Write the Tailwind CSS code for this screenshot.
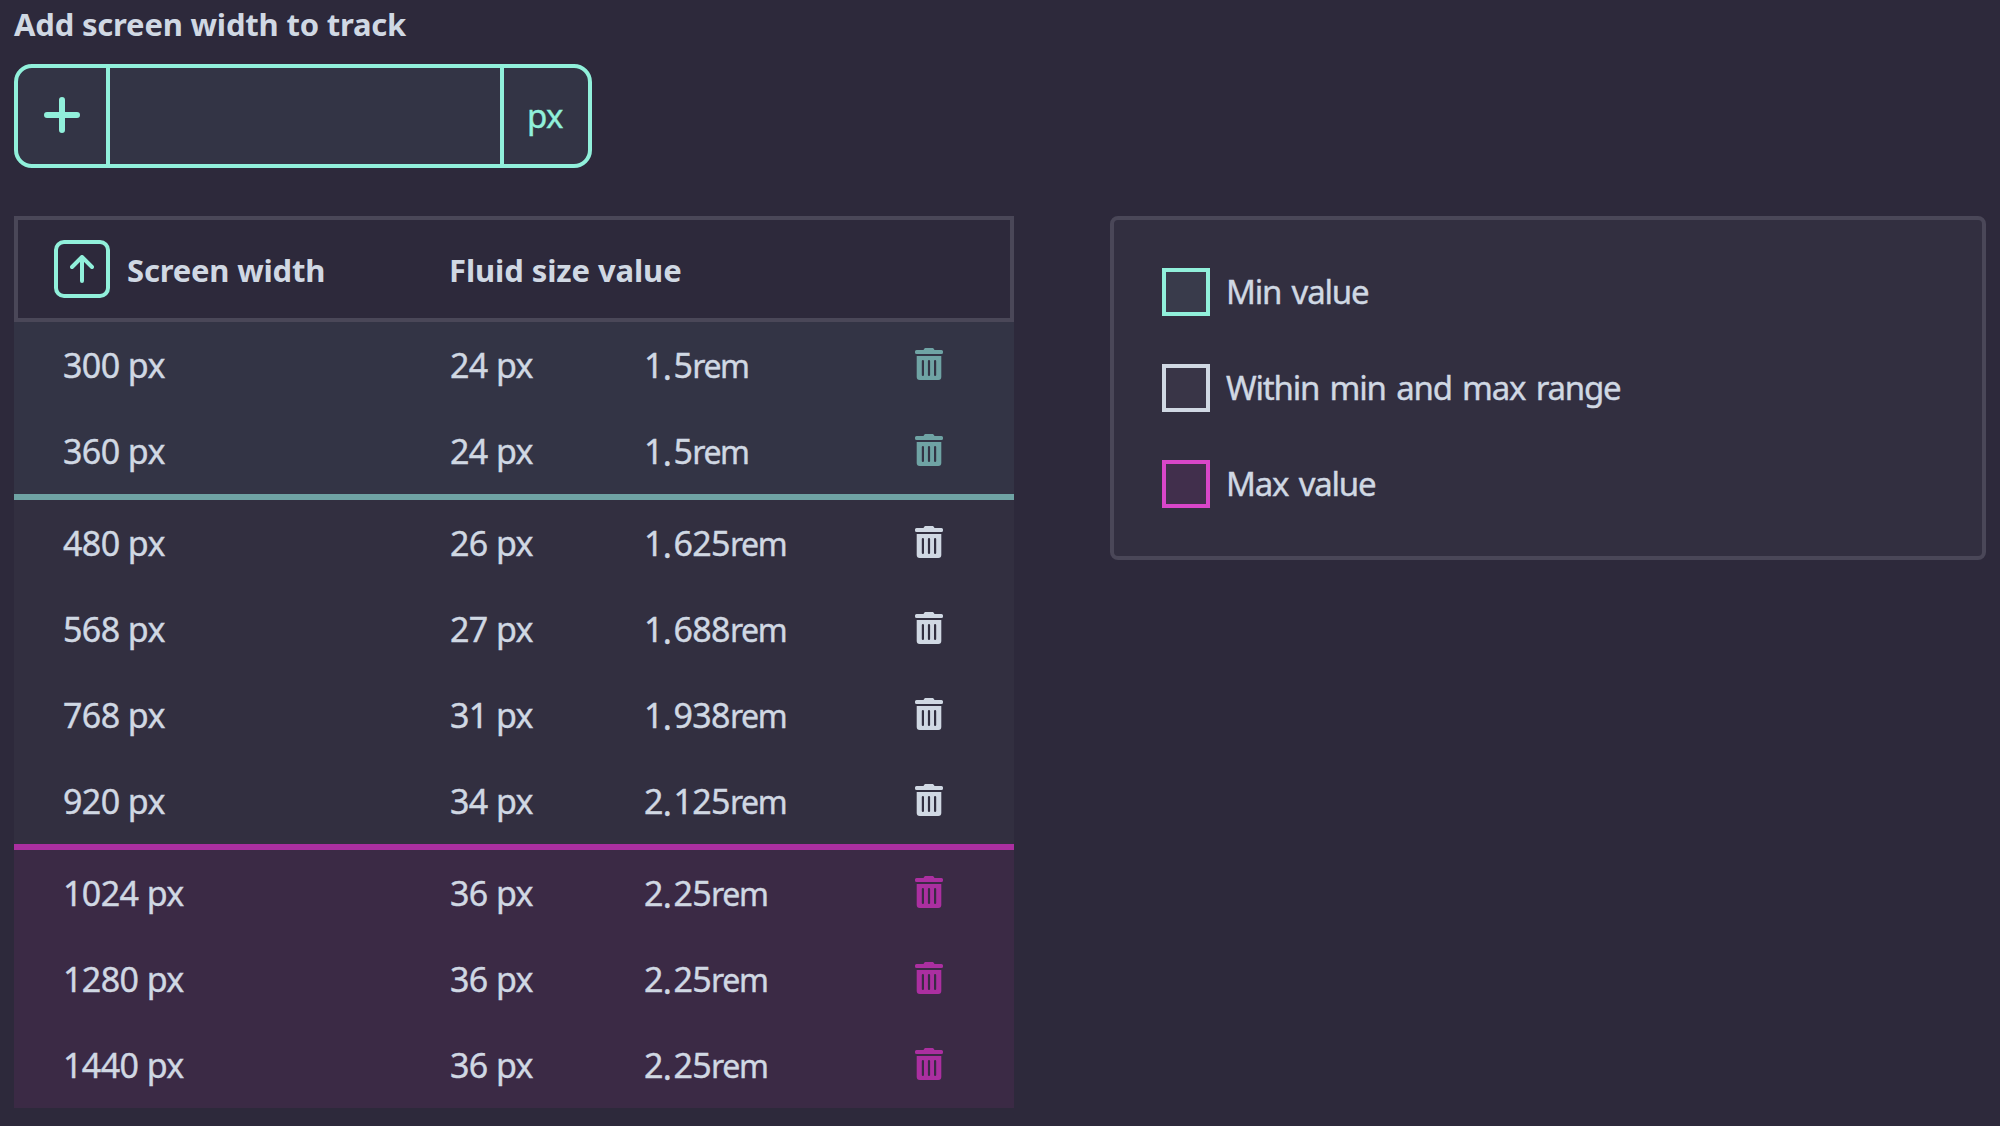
<!DOCTYPE html>
<html lang="en">
<head>
<meta charset="utf-8">
<title>Screen widths</title>
<script src="https://cdn.jsdelivr.net/npm/@tailwindcss/browser@4"></script>
</head>
<body class="min-h-screen bg-[#2d293b] px-[14px] font-['Noto_Sans',sans-serif] text-[34px] text-[#d0d8e3]">
<svg class="hidden">
  <symbol id="trash" viewBox="0 0 30 32">
    <path fill="currentColor" fill-rule="evenodd" d="M9.600 2C10 .6 10.800 0 12 0h6c1.200 0 2 .6 2.400 2H27.500a1.500 1.500 0 0 1 1.500 1.500v1a1.500 1.500 0 0 1-1.500 1.500h-25A1.500 1.500 0 0 1 1 4.500v-1A1.500 1.500 0 0 1 2.500 2zM2.700 8h24.600v21a3 3 0 0 1-3 3H5.700a3 3 0 0 1-3-3zM8.900 12a1.100 1.100 0 0 0-1.100 1.100v13.800a1.100 1.100 0 0 0 2.200 0V13.100A1.100 1.100 0 0 0 8.900 12zM15 12a1.100 1.100 0 0 0-1.100 1.100v13.800a1.100 1.100 0 0 0 2.200 0V13.100A1.100 1.100 0 0 0 15 12zM21.100 12a1.100 1.100 0 0 0-1.100 1.100v13.800a1.100 1.100 0 0 0 2.200 0V13.100a1.100 1.100 0 0 0-1.100-1.100z"/>
  </symbol>
</svg>
<label class="block text-[31px] leading-[48px] font-bold tracking-[-0.2px]">Add screen width to track</label>
<div class="mt-4 flex h-[104px] w-[578px] overflow-hidden rounded-[18px] border-4 border-[#91f0db] bg-[#333445] text-[#91f0db]">
  <button class="flex w-[92px] items-center justify-center border-r-4 border-[#91f0db] pb-0.5">
    <svg class="h-9 w-9" viewBox="0 0 36 36" fill="none" stroke="currentColor" stroke-width="6" stroke-linecap="round"><path d="M18 3v30M3 18h30"/></svg>
  </button>
  <div class="flex-1"></div>
  <div class="flex w-[88px] items-center justify-center border-l-4 border-[#91f0db] pr-0.5 pb-0.5 text-[33px] leading-none tracking-[-0.5px] [-webkit-text-stroke:0.4px]">px</div>
</div>
<div class="mt-12 flex items-start justify-between">
  <div class="w-[1000px]">
    <div class="flex h-[106px] items-center border-4 border-[#4a4758] pl-9 text-[31px] font-bold tracking-[-0.2px]">
      <button class="flex h-[58px] w-14 items-center justify-center rounded-[10px] border-4 border-[#91f0db] text-[#91f0db]">
        <svg class="h-7 w-6" viewBox="0 0 24 28" fill="none" stroke="currentColor" stroke-width="4" stroke-linecap="round" stroke-linejoin="round"><path d="M12 26V2M2 12L12 2l10 10"/></svg>
      </button>
      <span class="ml-[17px] w-[322px] pt-0.5">Screen width</span>
      <span class="pt-0.5 tracking-[-0.1px]">Fluid size value</span>
    </div>
    <div id="rows"></div>
  </div>
  <div class="flex h-[344px] w-[876px] flex-col gap-12 rounded-lg border-4 border-[#4a4758] bg-[#322f40] py-12 pl-12 text-[33px] leading-[48px] tracking-[-1.2px] [word-spacing:3px] [-webkit-text-stroke:0.4px]">
    <div class="flex h-12 gap-4"><span class="h-12 w-12 border-4 border-[#91f0db] bg-[#393b4b]"></span>Min value</div>
    <div class="flex h-12 gap-4"><span class="h-12 w-12 border-4 border-[#d0d8e3] bg-[#393547]"></span>Within min and max range</div>
    <div class="flex h-12 gap-4"><span class="h-12 w-12 border-4 border-[#d946c9] bg-[#412f4c]"></span>Max value</div>
  </div>
</div>
<script>
const groups = [
  { box: 'bg-[#333445] border-b-6 border-[#6fa3a4]', icon: 'text-[#6fa3a4]', rows: [[300, 24, '1.5'], [360, 24, '1.5']] },
  { box: 'bg-[#322f40] border-b-6 border-[#ab2fa0]', icon: 'text-[#d0d8e3]', rows: [[480, 26, '1.625'], [568, 27, '1.688'], [768, 31, '1.938'], [920, 34, '2.125']] },
  { box: 'bg-[#3b2a45]', icon: 'text-[#ab2fa0]', rows: [[1024, 36, '2.25'], [1280, 36, '2.25'], [1440, 36, '2.25']] }
];
document.getElementById('rows').innerHTML = groups.map(g => `<div class="${g.box}">` + g.rows.map(([w, s, r]) => `
  <div class="grid h-[86px] grid-cols-[387px_194px_270px_30px] items-center pl-[49px] leading-[86px] tracking-[-0.6px] [-webkit-text-stroke:0.4px]">
    <span>${w} px</span><span>${s} px</span><span>${r.replace('.', '<span class="relative top-[2px] mr-[2px] leading-none">.</span>')}<span class="text-[32px] leading-none tracking-[-1.4px]">rem</span></span>
    <svg class="mb-0.5 h-8 w-[30px] ${g.icon}"><use href="#trash"/></svg>
  </div>`).join('') + '</div>').join('');
</script>
</body>
</html>
